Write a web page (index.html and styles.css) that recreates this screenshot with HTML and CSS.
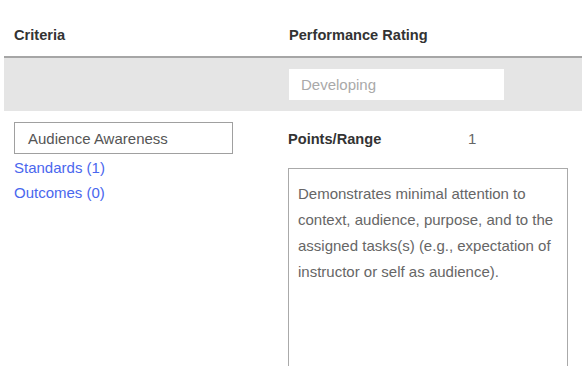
FILE: index.html
```html
<!DOCTYPE html>
<html lang="en">

<head>
  <meta charset="UTF-8" />
  <meta name="viewport" content="width=device-width, initial-scale=1.0" />
  <title>Rubric</title>
  <link rel="stylesheet" href="styles.css">
</head>

<body>
  <section class="rubric">
    <div class="rubric-head">
      <div class="col-criteria">Criteria</div>
      <div class="col-rating">Performance Rating</div>
    </div>

    <div class="rating-band">
      <div class="col-criteria"></div>
      <div class="col-rating">
        <div class="level-name">Developing</div>
      </div>
    </div>

    <div class="rubric-row">
      <div class="col-criteria">
        <div class="criterion-name">Audience Awareness</div>
        <a class="link" href="#">Standards (1)</a>
        <a class="link" href="#">Outcomes (0)</a>
      </div>
      <div class="col-rating">
        <div class="points">
          <span class="points-label">Points/Range</span>
          <span class="points-value">1</span>
        </div>
        <div class="description">
          Demonstrates minimal attention to context, audience, purpose, and to the assigned tasks(s) (e.g., expectation of instructor or self as audience).
        </div>
      </div>
    </div>
  </section>
</body>

</html>
```

FILE: styles.css
```css
* {
  box-sizing: border-box;
}

body {
  margin: 0;
  padding: 0;
  background-color: #ffffff;
  font-family: "Liberation Sans", Arial, sans-serif;
  overflow: hidden;
}

.rubric {
  margin-left: 4px;
}

.col-criteria {
  width: 284px;
  padding-left: 10px;
  flex-shrink: 0;
}

.col-rating {
  flex: 1;
}

.rubric-head {
  display: flex;
  padding: 25px 0 11px;
  line-height: 20px;
  font-size: 14.6px;
  font-weight: bold;
  color: #333333;
  border-bottom: 2px solid #a6a6a6;
}

.rubric-head .col-rating {
  padding-left: 1px;
}

.rating-band {
  display: flex;
  padding: 11px 0;
  background-color: #e5e5e5;
}

.level-name {
  width: 215px;
  height: 31px;
  margin-left: 1px;
  padding-left: 12px;
  background-color: #ffffff;
  font-size: 15px;
  line-height: 31px;
  color: #a9a9a9;
}

.rubric-row {
  display: flex;
  padding-top: 11px;
}

.criterion-name {
  width: 219px;
  height: 32px;
  margin-bottom: 1px;
  padding-left: 13px;
  border: 1px solid #a0a0a0;
  font-size: 15px;
  line-height: 31px;
  color: #555555;
}

.link {
  display: block;
  font-size: 15px;
  line-height: 25px;
  color: #4a67ee;
  text-decoration: none;
}

.points {
  display: flex;
  margin-top: 7px;
  line-height: 20px;
}

.points-label {
  width: 180px;
  font-size: 14.6px;
  font-weight: bold;
  color: #333333;
}

.points-value {
  font-size: 15px;
  color: #666666;
}

.description {
  width: 280px;
  height: 220px;
  margin-top: 19px;
  padding: 12px 12px 15px 9px;
  border: 1px solid #aaaaaa;
  font-size: 15px;
  line-height: 26px;
  color: #666666;
}
```
